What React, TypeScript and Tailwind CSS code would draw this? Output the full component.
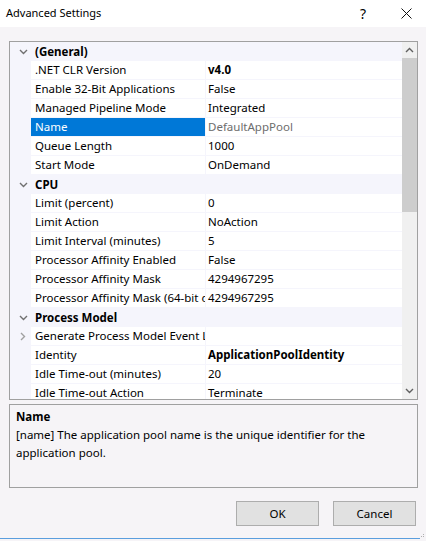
import React from 'react';

type Row =
  | { kind: 'cat'; label: string }
  | { kind: 'prop'; name: string; value?: string; bold?: boolean; expandable?: boolean; selected?: boolean };

const rows: Row[] = [
  { kind: 'cat', label: '(General)' },
  { kind: 'prop', name: '.NET CLR Version', value: 'v4.0', bold: true },
  { kind: 'prop', name: 'Enable 32-Bit Applications', value: 'False' },
  { kind: 'prop', name: 'Managed Pipeline Mode', value: 'Integrated' },
  { kind: 'prop', name: 'Name', value: 'DefaultAppPool', selected: true },
  { kind: 'prop', name: 'Queue Length', value: '1000' },
  { kind: 'prop', name: 'Start Mode', value: 'OnDemand' },
  { kind: 'cat', label: 'CPU' },
  { kind: 'prop', name: 'Limit (percent)', value: '0' },
  { kind: 'prop', name: 'Limit Action', value: 'NoAction' },
  { kind: 'prop', name: 'Limit Interval (minutes)', value: '5' },
  { kind: 'prop', name: 'Processor Affinity Enabled', value: 'False' },
  { kind: 'prop', name: 'Processor Affinity Mask', value: '4294967295' },
  { kind: 'prop', name: 'Processor Affinity Mask (64-bit option)', value: '4294967295' },
  { kind: 'cat', label: 'Process Model' },
  { kind: 'prop', name: 'Generate Process Model Event Log Entry', expandable: true },
  { kind: 'prop', name: 'Identity', value: 'ApplicationPoolIdentity', bold: true },
  { kind: 'prop', name: 'Idle Time-out (minutes)', value: '20' },
  { kind: 'prop', name: 'Idle Time-out Action', value: 'Terminate' },
];

function ChevronDown({ className = '' }: { className?: string }) {
  return (
    <svg width="9" height="6" viewBox="0 0 9 6" className={className}>
      <path d="M1 1 L4.5 4.5 L8 1" fill="none" stroke="currentColor" strokeWidth="1.4" />
    </svg>
  );
}

function ChevronRight() {
  return (
    <svg width="6" height="9" viewBox="0 0 6 9">
      <path d="M1 1 L4.5 4.5 L1 8" fill="none" stroke="currentColor" strokeWidth="1.4" />
    </svg>
  );
}

function GridRow({ row }: { row: Row }) {
  if (row.kind === 'cat') {
    return (
      <div className="flex h-[19px] shrink-0 bg-[#f5f5fc]">
        <div className="flex w-[21px] shrink-0 items-center justify-end pr-[3px] text-[#707070]">
          <ChevronDown />
        </div>
        <div className="flex items-center pl-[4px] font-bold">{row.label}</div>
      </div>
    );
  }
  return (
    <div className="flex h-[19px] shrink-0 bg-[#f5f5fc]">
      <div className="flex w-[21px] shrink-0 items-center justify-end pr-[5px] text-[#a0a0a0]">
        {row.expandable && <ChevronRight />}
      </div>
      <div
        className={
          row.selected
            ? 'flex h-[18px] w-[174px] shrink-0 items-center overflow-hidden whitespace-nowrap bg-[#0078d7] pl-[4px] text-white'
            : 'flex h-[18px] w-[174px] shrink-0 items-center overflow-hidden whitespace-nowrap bg-white pl-[4px]'
        }
      >
        {row.name}
      </div>
      <div className="w-px shrink-0" />
      <div
        className={
          'flex h-[18px] flex-1 items-center overflow-hidden whitespace-nowrap bg-white pl-[2px] ' +
          (row.selected ? 'text-[#6d6d6d] ' : '') +
          (row.bold ? 'font-bold' : '')
        }
      >
        {row.value}
      </div>
    </div>
  );
}

export default function App() {
  return (
    <div className="relative flex h-[541px] w-[426px] flex-col overflow-hidden bg-[#f6f4f7] font-['Segoe_UI','Noto_Sans',sans-serif] text-[11.5px] text-black">
      {/* Title bar */}
      <div className="flex h-[27px] shrink-0 items-center bg-white pl-[6px]">
        <span className="text-[11px]">Advanced Settings</span>
        <span className="ml-auto mr-[35px] text-[14px] leading-none">?</span>
        <svg width="11" height="11" viewBox="0 0 11 11" className="mr-[14px]">
          <path d="M0.5 0.5 L10.5 10.5 M10.5 0.5 L0.5 10.5" stroke="#111" strokeWidth="1" />
        </svg>
      </div>

      <div className="flex flex-col px-[9px] pt-[14px]">
        {/* Property grid */}
        <div className="flex h-[359px] w-[409px] border border-[#a0a0a0] bg-[#f5f5fc]">
          <div className="flex flex-1 flex-col overflow-hidden">
            {rows.map((r, i) => (
              <GridRow key={i} row={r} />
            ))}
          </div>
          <div className="flex w-[15px] shrink-0 flex-col bg-[#f0f0f0]">
            <div className="flex h-[16px] items-center justify-center text-[#606060]">
              <ChevronDown className="rotate-180" />
            </div>
            <div className="h-[154px] bg-[#cdcdcd]" />
            <div className="flex-1" />
            <div className="flex h-[16px] items-center justify-center text-[#606060]">
              <ChevronDown />
            </div>
          </div>
        </div>

        {/* Description */}
        <div className="mt-[4px] h-[84px] w-[409px] border border-[#a0a0a0] px-[6px] pt-[3px] leading-[18px]">
          <div className="font-bold">Name</div>
          <div>[name] The application pool name is the unique identifier for the application pool.</div>
        </div>

        {/* Buttons */}
        <div className="mt-[13px] flex justify-end gap-[14px] pr-[1px]">
          <button className="h-[25px] w-[83px] border border-[#adadad] bg-[#e1e1e1]">OK</button>
          <button className="h-[25px] w-[83px] border border-[#adadad] bg-[#e1e1e1]">Cancel</button>
        </div>
      </div>

      <div className="absolute bottom-[2px] left-0 h-px w-[420px] bg-[#5b9ede]" />
      <div className="absolute bottom-[4px] right-[2px] grid grid-cols-2 gap-[1px]">
        <div className="h-px w-px" />
        <div className="h-px w-px bg-[#b0b0b0]" />
        <div className="h-px w-px bg-[#b0b0b0]" />
        <div className="h-px w-px bg-[#b0b0b0]" />
      </div>
    </div>
  );
}
